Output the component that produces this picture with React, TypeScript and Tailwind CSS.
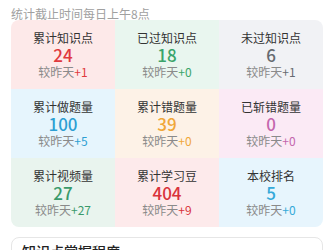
const stats = [
  { label: '累计知识点', value: '24', delta: '+1', bg: 'bg-[#fde9e9]', fg: 'text-[#e0393e]' },
  { label: '已过知识点', value: '18', delta: '+0', bg: 'bg-[#e9f6ef]', fg: 'text-[#3aa46a]' },
  { label: '未过知识点', value: '6', delta: '+1', bg: 'bg-[#f1f2f5]', fg: 'text-[#666a70]' },
  { label: '累计做题量', value: '100', delta: '+5', bg: 'bg-[#e6f5fd]', fg: 'text-[#2d9fd3]' },
  { label: '累计错题量', value: '39', delta: '+0', bg: 'bg-[#fdf2e7]', fg: 'text-[#f0a73a]' },
  { label: '已斩错题量', value: '0', delta: '+0', bg: 'bg-[#fbeaf5]', fg: 'text-[#c466ad]' },
  { label: '累计视频量', value: '27', delta: '+27', bg: 'bg-[#e9f4ee]', fg: 'text-[#3a9a6b]' },
  { label: '累计学习豆', value: '404', delta: '+9', bg: 'bg-[#fdeaeb]', fg: 'text-[#d9333b]' },
  { label: '本校排名', value: '5', delta: '+0', bg: 'bg-[#e7f5fd]', fg: 'text-[#35a9d9]' },
];

export default function App() {
  return (
    <div
      className="h-[250px] w-[334px] overflow-hidden bg-white"
      style={{ fontFamily: '"Noto Sans CJK SC", "Noto Sans", sans-serif' }}
    >
      <p className="px-[11px] pt-[8px] text-[12px] leading-[12px] text-[#a0a0a0]">统计截止时间每日上午8点</p>

      <div className="mx-[11px] grid grid-cols-3 overflow-hidden rounded-lg">
        {stats.map((s) => (
          <div key={s.label} className={`flex h-[69px] flex-col items-center pt-[9px] ${s.bg}`}>
            <span className="text-[12px] leading-[17px] text-[#333]">{s.label}</span>
            <span className={`text-[17px] font-medium leading-[17px] ${s.fg}`}>{s.value}</span>
            <span className="text-[12px] leading-[17px] text-[#8a8a8a]">
              较昨天<span className={s.fg}>{s.delta}</span>
            </span>
          </div>
        ))}
      </div>

      <div className="mx-[11px] mt-[10px] rounded-lg border border-[#e6e6e6] px-[10px]">
        <span className="text-[14px] font-medium leading-[20px] text-[#222]">知识点掌握程度</span>
      </div>
    </div>
  );
}
